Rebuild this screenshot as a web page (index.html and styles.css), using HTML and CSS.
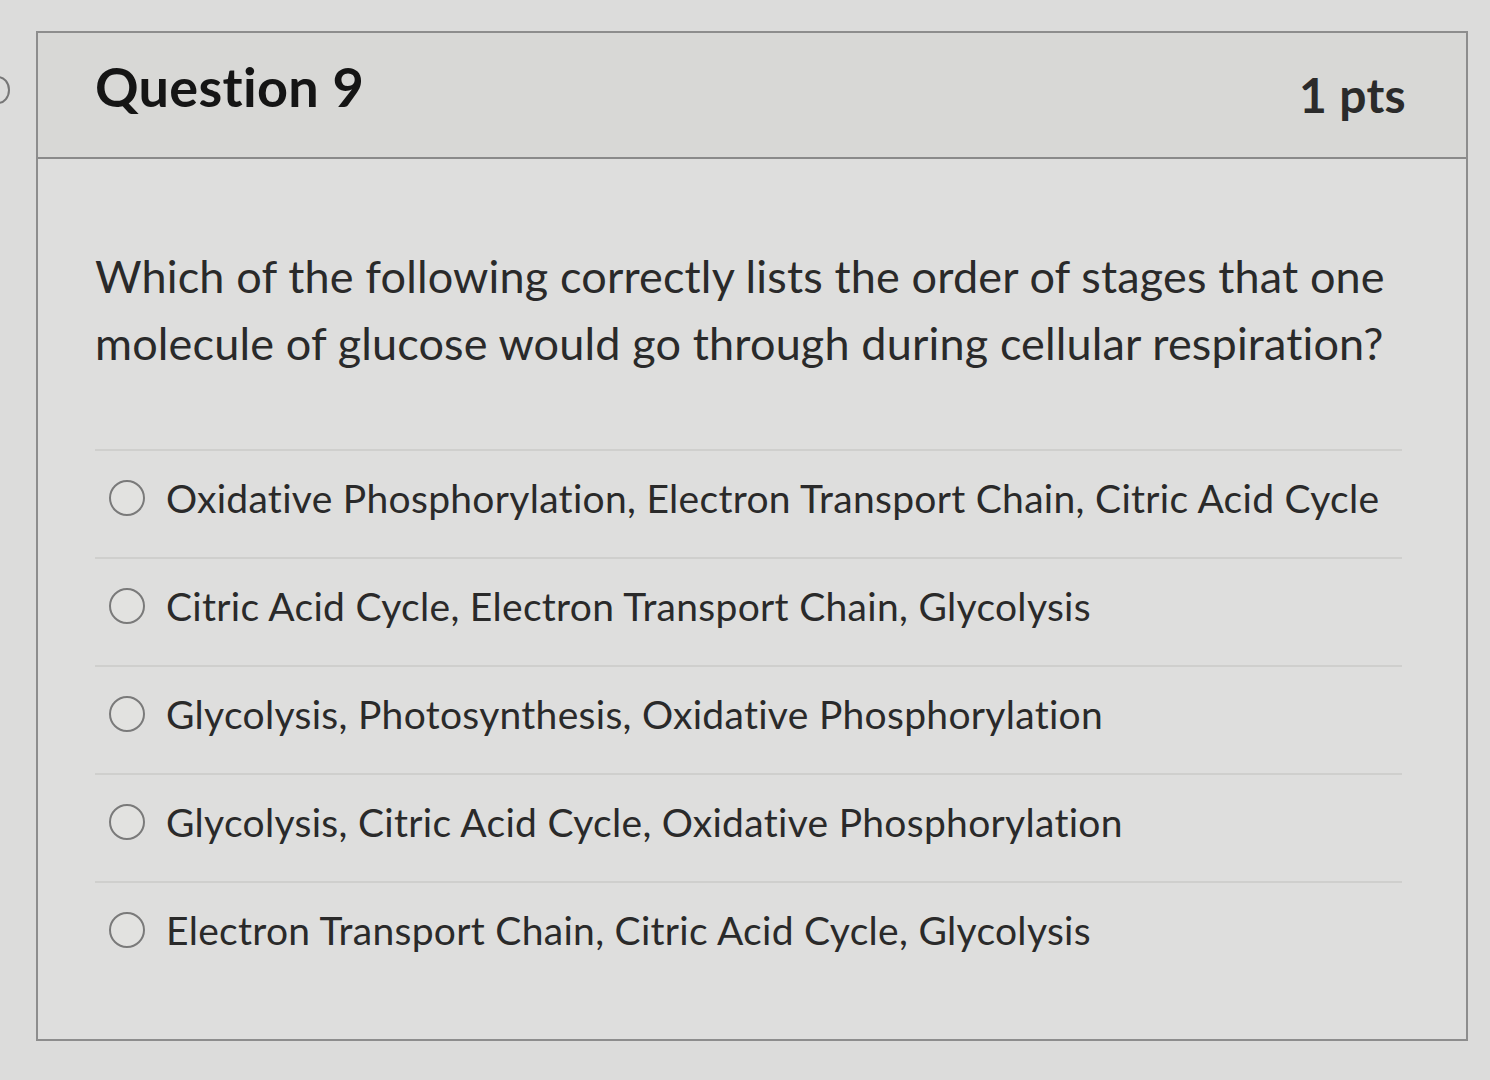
FILE: index.html
```html
<!DOCTYPE html>
<html>
<head>
<meta charset="utf-8">
<link rel="stylesheet" href="styles.css">
</head>
<body>
<div class="edge-mark"></div>
<div class="card">
  <div class="card-header">
    <h2 class="title">Question 9</h2>
    <span class="pts">1 pts</span>
  </div>
  <div class="card-body">
    <p class="question">Which of the following correctly lists the order of stages that one molecule of glucose would go through during cellular respiration?</p>
    <div class="answers">
      <label class="answer"><span class="radio"></span><span class="answer-text">Oxidative Phosphorylation, Electron Transport Chain, Citric Acid Cycle</span></label>
      <label class="answer"><span class="radio"></span><span class="answer-text">Citric Acid Cycle, Electron Transport Chain, Glycolysis</span></label>
      <label class="answer"><span class="radio"></span><span class="answer-text">Glycolysis, Photosynthesis, Oxidative Phosphorylation</span></label>
      <label class="answer"><span class="radio"></span><span class="answer-text">Glycolysis, Citric Acid Cycle, Oxidative Phosphorylation</span></label>
      <label class="answer"><span class="radio"></span><span class="answer-text">Electron Transport Chain, Citric Acid Cycle, Glycolysis</span></label>
    </div>
  </div>
</div>
</body>
</html>
```

FILE: styles.css
```css
html, body {
  margin: 0;
  padding: 0;
}
body {
  background: #dcdcdb;
  font-family: Lato, "Open Sans", sans-serif;
  color: #262626;
  width: 1490px;
  height: 1080px;
  overflow: hidden;
  position: relative;
}
.edge-mark {
  position: absolute;
  left: -14px;
  top: 76px;
  width: 20px;
  height: 24px;
  border: 2px solid #777;
  border-radius: 50%;
}
.card {
  margin: 31px 0 0 36px;
  width: 1428px;
  border: 2px solid #8d8d8d;
  background: #dededd;
}
.card-header {
  display: flex;
  justify-content: space-between;
  align-items: flex-start;
  height: 124px;
  padding: 0 60px 0 57px;
  background: #d8d8d6;
  border-bottom: 2px solid #8a8a8a;
}
.title {
  margin: 21px 0 0;
  font-size: 54px;
  font-weight: 700;
  color: #151515;
  letter-spacing: 0.3px;
}
.pts {
  margin-top: 33px;
  font-size: 48px;
  font-weight: 700;
  color: #2b2b2b;
  letter-spacing: 0.3px;
}
.card-body {
  padding: 84px 64px 50px 57px;
}
.question {
  margin: 0;
  font-size: 45px;
  line-height: 67px;
  color: #2a2a2a;
  letter-spacing: 0.15px;
}
.answers {
  margin-top: 72px;
}
.answer {
  display: flex;
  align-items: center;
  gap: 21px;
  height: 94px;
  padding: 0 0 12px 14px;
  border-top: 2px solid #cfcfcd;
}
.radio {
  width: 32px;
  height: 32px;
  border: 2px solid #7a7a7a;
  border-radius: 50%;
  background: #e2e2e0;
  flex: none;
}
.answer-text {
  font-size: 39px;
  color: #2a2a2a;
  letter-spacing: 0.3px;
}
```
